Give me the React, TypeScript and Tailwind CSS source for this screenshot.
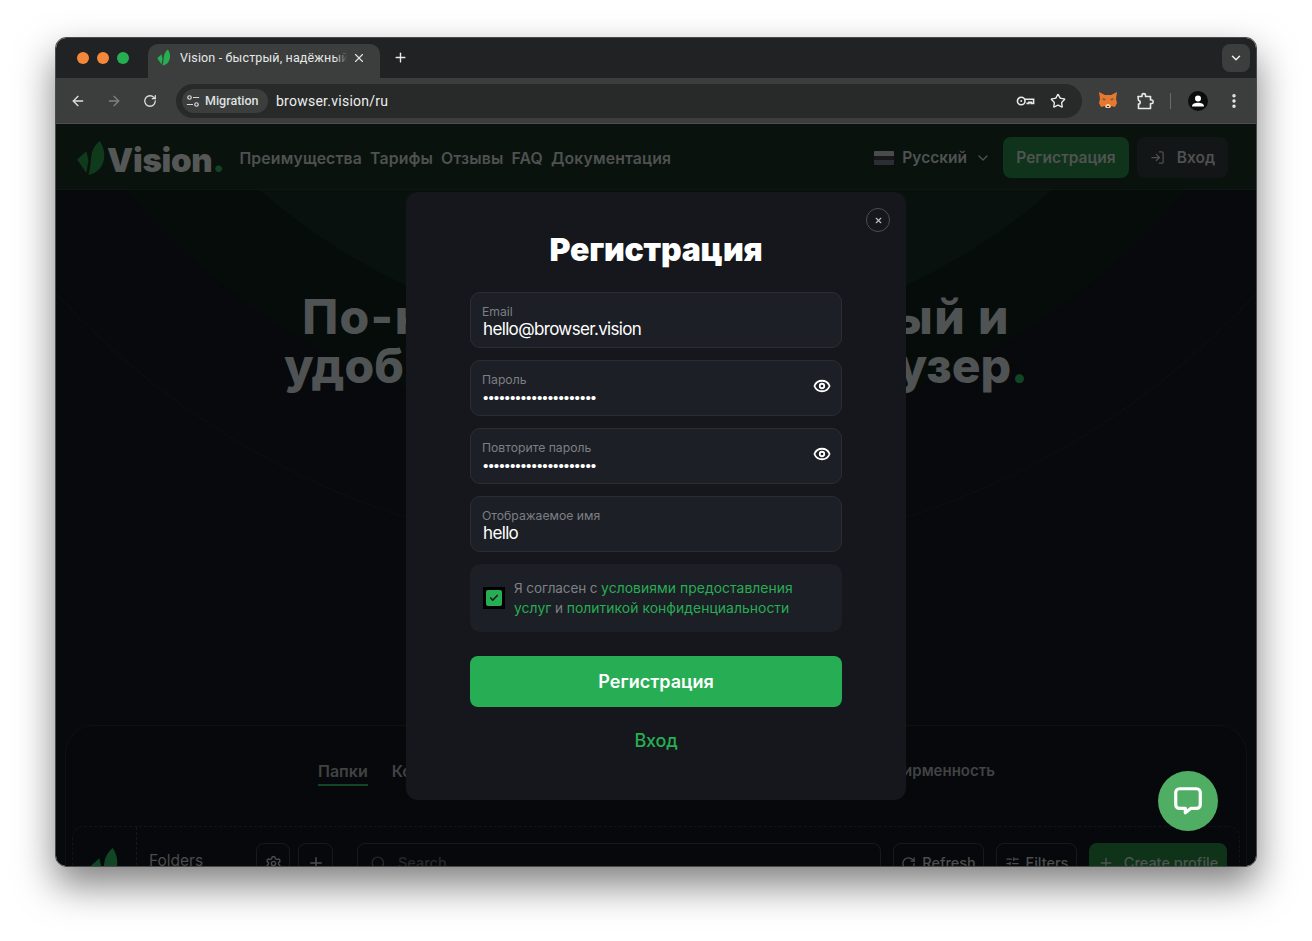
import React from 'react';
import { ArrowLeft, ArrowRight, Check, ChevronDown, EllipsisVertical, Eye, LogIn, Plus, RotateCw, Search, Settings, SlidersHorizontal, Star, X } from 'lucide-react';

const NAV_ITEMS = ['Преимущества', 'Тарифы', 'Отзывы', 'FAQ', 'Документация'];

const LeafLogo = ({ className, big, small }: { className: string; big: string; small: string }) => (
  <svg viewBox="0 0 28 35" className={className}>
    <path fill={big} d="M22 1C27 8 28 18 24 25C21 30 16 33 11 34C13 28 13 20 14 14C15 9 18 4 22 1Z" />
    <path fill={small} d="M0 19L9 11L11 20L9 32Z" />
  </svg>
);

const TuneIcon = () => (
  <svg viewBox="0 0 16 16" className="h-[14px] w-[14px]" fill="none" stroke="#d6d8d8" strokeWidth="1.4">
    <circle cx="4" cy="4" r="2" />
    <path d="M8 4h7M1 12h7" />
    <circle cx="12" cy="12" r="2" />
  </svg>
);

const KeyIcon = () => (
  <svg viewBox="0 0 20 12" className="h-[12px] w-[19px]" fill="none" stroke="#e8eaea" strokeWidth="1.7">
    <circle cx="5.5" cy="6" r="4" />
    <circle cx="5.5" cy="6" r="1" fill="#e8eaea" stroke="none" />
    <path d="M9.5 4.2H18.5V8.5H16V7.5H13.5V8.5H11" />
  </svg>
);

const PuzzleIcon = () => (
  <svg viewBox="0 0 18 18" className="h-[18px] w-[18px]" fill="none" stroke="#e8eaea" strokeWidth="1.6" strokeLinejoin="round">
    <path d="M2 4.5H6V3C6 1.2 9.5 1.2 9.5 3V4.5H14.5V8H16C17.5 8 17.5 11.5 16 11.5H14.5V16.5H2.5V12C4.8 12 4.8 8.5 2.5 8.5Z" />
  </svg>
);

const FoxIcon = () => (
  <svg viewBox="0 0 18 17" className="h-[17px] w-[18px]">
    <path fill="#e9782c" d="M0 0L6 3H12L18 0L17 7L18 11L16 15L12 14L11 16H7L6 14L2 15L0 11L1 7Z" />
    <path fill="#5d6266" d="M3 6L7 7L5 9ZM15 6L11 7L13 9Z" />
    <path fill="#f7c9a3" d="M6 14L8 12H10L12 14L11 16H7Z" />
    <path fill="#2b2b2b" d="M8 14H10V15H8Z" />
  </svg>
);

const AvatarIcon = () => (
  <span className="flex h-[20px] w-[20px] items-center justify-center overflow-hidden rounded-full bg-[#0b0c0d]">
    <svg viewBox="0 0 20 20" className="h-[20px] w-[20px]" fill="#ffffff">
      <circle cx="10" cy="7.5" r="3" />
      <path d="M4 15.5C4 12.8 7 11.8 10 11.8C13 11.8 16 12.8 16 15.5Z" />
    </svg>
  </span>
);

const ChatIcon = () => (
  <svg viewBox="0 0 30 30" className="h-[32px] w-[32px]" fill="none" stroke="#ffffff" strokeWidth="3" strokeLinejoin="round">
    <path d="M7 3.5H23C25 3.5 26.5 5 26.5 7V18.5C26.5 20.5 25 22 23 22H17.5L12.5 26V22H7C5 22 3.5 20.5 3.5 18.5V7C3.5 5 5 3.5 7 3.5Z" />
  </svg>
);

const Field = ({ label, value, secret }: { label: string; value: string; secret?: boolean }) => (
  <div className="flex h-[56px] items-center rounded-[10px] border border-[#2a2d33] bg-[#1c1f26] pl-[11px] pr-[10px]">
    <div className="flex min-w-0 flex-1 flex-col pt-[5px]">
      <span className="text-[12.2px] leading-[14px] text-[#7d7f83]">{label}</span>
      {secret ? (
        <span className="mt-[1px] h-[20px] pl-[1px] font-['Liberation_Sans',sans-serif] text-[15.4px] leading-[20px] text-white">{value}</span>
      ) : (
        <span className="h-[21px] pl-[1px] text-[17px] leading-[20px] tracking-[-0.65px] text-white">{value}</span>
      )}
    </div>
    {secret && <Eye className="mb-[4px] h-[18px] w-[18px] text-white" strokeWidth={2.4} />}
  </div>
);

const BackButton = ({ className, children }: { className: string; children: React.ReactNode }) => (
  <div className={`flex h-[40px] items-center justify-center gap-[6px] rounded-lg border border-[#161b19] text-[14.5px] font-medium text-[#4b4d4e] ${className}`}>
    {children}
  </div>
);

export default function App() {
  return (
    <div className="h-[941px] w-[1312px] overflow-hidden bg-white pl-[55px] pt-[37px] font-['Inter',sans-serif]">
      <div className="relative flex h-[830px] w-[1202px] flex-col overflow-hidden rounded-[11px] border border-[#4a4c4c] shadow-[0_18px_38px_rgba(0,0,0,0.5)]">
        {/* tab strip */}
        <div className="flex h-[40px] shrink-0 items-end bg-[#202224]">
          <div className="flex h-[40px] w-[92px] shrink-0 items-center gap-[8px] pb-[1px] pl-[21px]">
            <span className="h-[12px] w-[12px] rounded-full bg-[#f5873a]" />
            <span className="h-[12px] w-[12px] rounded-full bg-[#f5873a]" />
            <span className="h-[12px] w-[12px] rounded-full bg-[#27ae50]" />
          </div>
          <div className="flex h-[34px] w-[232px] shrink-0 items-center rounded-t-[10px] bg-[#3c3e3e] pb-[7px] pl-[9px] pr-[9px]">
            <LeafLogo className="h-[17px] w-[14px] shrink-0" big="#27ae50" small="#27ae50" />
            <span className="relative ml-[9px] h-[18px] w-[167px] overflow-hidden whitespace-nowrap font-['Roboto',sans-serif] text-[12.5px] leading-[18px] tracking-[0.15px] text-[#e6e8e8]">
              Vision - быстрый, надёжный
              <span className="absolute right-0 top-0 h-[18px] w-[12px] bg-gradient-to-r from-transparent to-[#3c3e3e]" />
            </span>
            <X className="ml-[5px] h-[14px] w-[14px] shrink-0 text-[#dfe1e1]" strokeWidth={2} />
          </div>
          <div className="flex h-[34px] w-[40px] shrink-0 items-center justify-center pb-[7px]">
            <Plus className="h-[15px] w-[15px] text-[#e8eaea]" strokeWidth={2.2} />
          </div>
          <div className="flex h-[40px] flex-1 items-center justify-end pr-[6px]">
            <div className="flex h-[28px] w-[28px] items-center justify-center rounded-lg bg-[#3c3e3e]">
              <ChevronDown className="h-[14px] w-[14px] text-[#e8eaea]" strokeWidth={2.6} />
            </div>
          </div>
        </div>

        {/* toolbar */}
        <div className="flex h-[46px] shrink-0 items-center border-b border-[#4c4f4e] bg-[#3c3e3e] font-['Roboto',sans-serif]">
          <div className="flex w-[120px] shrink-0 items-center pl-[14px]">
            <ArrowLeft className="h-[16px] w-[16px] text-[#dfe1e1]" />
            <ArrowRight className="ml-[20px] h-[16px] w-[16px] text-[#7f8282]" />
            <RotateCw className="ml-[21px] h-[14px] w-[14px] text-[#dfe1e1]" strokeWidth={2.2} />
          </div>
          <div className="flex h-[34px] w-[906px] shrink-0 items-center rounded-full bg-[#282a2a] pl-[6px] pr-[16px]">
            <div className="flex h-[24px] w-[86px] items-center gap-[5px] rounded-full bg-[#3c3e3e] pl-[4px]">
              <TuneIcon />
              <span className="pt-[1px] text-[12.5px] font-medium text-[#dfe1e1]">Migration</span>
            </div>
            <span className="ml-[8px] flex-1 pt-[1px] text-[14px] tracking-[0.25px] text-[#eceeee]">browser.vision/ru</span>
            <KeyIcon />
            <Star className="ml-[15px] h-[16px] w-[16px] text-[#eceeee]" strokeWidth={2} />
          </div>
          <div className="flex flex-1 items-center pl-[17px]">
            <FoxIcon />
            <span className="ml-[19px]"><PuzzleIcon /></span>
            <span className="ml-[16px] h-[16px] w-px bg-[#6a6c6c]" />
            <span className="ml-[17px]"><AvatarIcon /></span>
            <EllipsisVertical className="ml-[17px] h-[18px] w-[18px] text-[#e8eaea]" strokeWidth={2.6} />
          </div>
        </div>

        {/* dimmed page */}
        <div className="relative flex-1 overflow-hidden bg-[#07090c]">
          <svg className="absolute left-0 top-[-66px] h-[800px] w-[1200px]" viewBox="0 0 1200 800">
            <circle cx="600" cy="-316" r="695" fill="#060c0a" />
            <circle cx="600" cy="-316" r="598" fill="#09110e" />
            <circle cx="600" cy="-316" r="815" fill="none" stroke="#0b0e11" strokeWidth="1.5" />
          </svg>

          <div className="relative flex h-full flex-col">
            <header className="flex h-[66px] shrink-0 items-center border-b border-[#0f1714] bg-[#0a120e] pl-[21px] pr-[28px] pt-[2px]">
              <LeafLogo className="h-[36px] w-[29px] shrink-0" big="#0f3a1c" small="#0f3a1c" />
              <span className="ml-[1px] pt-[5px] text-[33px] font-black leading-none tracking-[-0.3px] text-[#555757]">
                Vision<span className="text-[#124524]">.</span>
              </span>
              <nav className="ml-[15px] flex gap-[8px] pt-[2px] text-[15.8px] font-semibold tracking-[0.15px] text-[#4f5151]">
                {NAV_ITEMS.map((item) => (
                  <span key={item}>{item}</span>
                ))}
              </nav>
              <div className="ml-auto flex items-center pt-[1px] text-[15.5px] font-semibold text-[#505252]">
                <span className="flex h-[14px] w-[20px] flex-col overflow-hidden rounded-[1px]">
                  <span className="h-1/3 bg-[#4a4c4c]" />
                  <span className="h-1/3 bg-[#16181c]" />
                  <span className="h-1/3 bg-[#2c2e33]" />
                </span>
                <span className="ml-[8px]">Русский</span>
                <ChevronDown className="ml-[8px] h-[16px] w-[16px]" />
              </div>
              <div className="ml-[12px] flex h-[41px] w-[126px] items-center justify-center rounded-lg bg-[#10331b] text-[15.5px] font-semibold text-[#505352]">
                Регистрация
              </div>
              <div className="ml-[8px] flex h-[41px] w-[91px] items-center justify-center gap-[12px] rounded-lg bg-[#131616] text-[15.5px] font-semibold text-[#4f5151]">
                <LogIn className="h-[15px] w-[15px]" />
                Вход
              </div>
            </header>

            <div className="h-[535px] shrink-0 pt-[102px] text-center text-[48px] font-extrabold leading-[49px] text-[#505353]">
              <p className="whitespace-nowrap tracking-[1.4px]">По-настоящему быстрый и</p>
              <p className="whitespace-nowrap tracking-[0px]">
                удобный антидетект браузер<span className="text-[#124524]">.</span>
              </p>
            </div>

            <section className="mx-[9px] flex-1 rounded-t-[28px] border border-b-0 border-[#0c1211] bg-[#06080b] px-[6px] pt-[35px]">
              <div className="ml-[246px] flex w-[677px] gap-[24px] text-[16px] font-semibold leading-[20px] text-[#414343]">
                <span className="border-b-2 border-[#124524] pb-[3px]">Папки</span>
                <span>Команда</span>
                <span className="ml-auto text-[15px]">Фирменность</span>
              </div>
              <div className="mt-[40px] flex h-[80px] rounded-xl border border-dashed border-[#10151a] pt-[16px] text-[14.5px]">
                <div className="-mt-[16px] flex w-[64px] shrink-0 justify-center border-r border-dashed border-[#14191c] pt-[20px]">
                  <LeafLogo className="h-[36px] w-[29px]" big="#124524" small="#124524" />
                </div>
                <span className="ml-[12px] w-[107px] shrink-0 pt-[6px] text-[15.5px] text-[#4a4c4d]">Folders</span>
                <BackButton className="w-[34px] shrink-0">
                  <Settings className="h-[17px] w-[17px]" />
                </BackButton>
                <BackButton className="ml-[8px] w-[35px] shrink-0">
                  <Plus className="h-[18px] w-[18px]" />
                </BackButton>
                <BackButton className="ml-[24px] w-[524px] shrink-0 !justify-start pl-[12px] text-[#26282a]">
                  <Search className="h-[17px] w-[17px]" />
                  <span className="ml-[5px]">Search</span>
                </BackButton>
                <BackButton className="ml-[12px] w-[91px] shrink-0">
                  <RotateCw className="h-[15px] w-[15px]" />
                  Refresh
                </BackButton>
                <BackButton className="ml-[12px] w-[81px] shrink-0">
                  <SlidersHorizontal className="h-[15px] w-[15px]" />
                  Filters
                </BackButton>
                <BackButton className="ml-[12px] w-[138px] shrink-0 border-0 bg-[#0f3318] !gap-[10px] text-[#505352]">
                  <Plus className="h-[16px] w-[16px]" />
                  Create profile
                </BackButton>
              </div>
            </section>
          </div>

          {/* registration dialog */}
          <div className="absolute left-[350px] top-[68px] flex h-[608px] w-[500px] flex-col rounded-[12px] bg-[#15171c] px-[64px] pt-[36px]">
            <button className="absolute right-[16px] top-[16px] flex h-[24px] w-[24px] items-center justify-center rounded-full border border-[#4b4d50]">
              <X className="h-[9px] w-[9px] text-[#bfc1c3]" strokeWidth={3} />
            </button>
            <h1 className="text-center text-[32px] font-black leading-[44px] tracking-[-0.2px] text-white">Регистрация</h1>
            <div className="mt-[20px] flex flex-col gap-[12px]">
              <Field label="Email" value="hello@browser.vision" />
              <Field label="Пароль" value="•••••••••••••••••••••" secret />
              <Field label="Повторите пароль" value="•••••••••••••••••••••" secret />
              <Field label="Отображаемое имя" value="hello" />
              <div className="flex h-[68px] items-center rounded-[10px] bg-[#1c1f26] pl-[13px]">
                <span className="flex h-[22px] w-[22px] shrink-0 items-center justify-center bg-black">
                  <span className="flex h-[16px] w-[16px] items-center justify-center rounded-[2px] bg-[#27ae54]">
                    <Check className="h-[10px] w-[10px] text-[#12261a]" strokeWidth={4} />
                  </span>
                </span>
                <p className="ml-[9px] w-[290px] text-[13.5px] leading-[20px] tracking-[-0.1px] text-[#7e8083]">
                  Я согласен с <span className="text-[13.9px] tracking-[0.05px] text-[#27ae54]">условиями предоставления услуг</span> и{' '}
                  <span className="text-[13.9px] tracking-[0.05px] text-[#27ae54]">политикой конфиденциальности</span>
                </p>
              </div>
            </div>
            <button className="mt-[24px] h-[51px] rounded-lg bg-[#27ae54] pb-[1px] text-[18px] font-semibold text-white">Регистрация</button>
            <span className="mt-[21px] text-center text-[18px] font-medium leading-[26px] tracking-[-0.2px] text-[#27ae54]">Вход</span>
          </div>

          <button className="absolute left-[1102px] top-[647px] flex h-[60px] w-[60px] items-center justify-center rounded-full bg-[#4fae63]">
            <ChatIcon />
          </button>
        </div>
      </div>
    </div>
  );
}
